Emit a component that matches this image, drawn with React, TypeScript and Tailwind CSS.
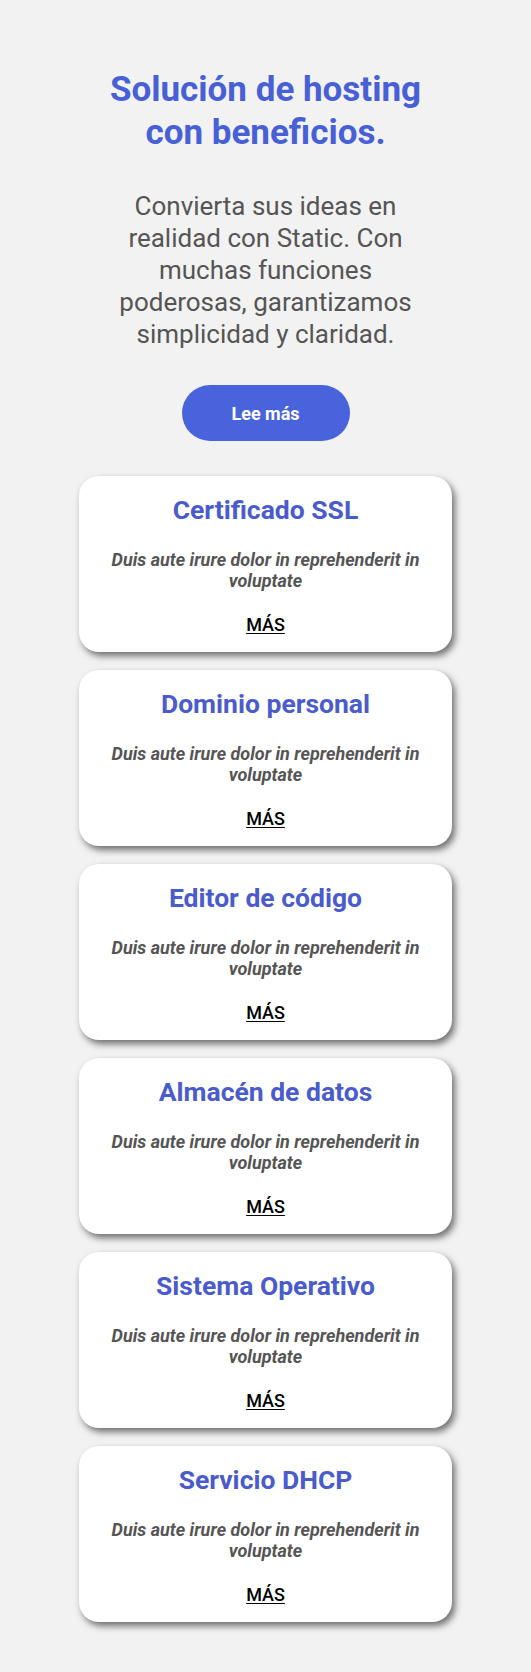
const features = [
  "Certificado SSL",
  "Dominio personal",
  "Editor de código",
  "Almacén de datos",
  "Sistema Operativo",
  "Servicio DHCP",
];

function FeatureCard({ title }: { title: string }) {
  return (
    <div className="w-[373px] bg-white rounded-[20px] shadow-[3px_4px_7px_rgba(0,0,0,0.55)] pt-[18px] pb-[18px] px-3 flex flex-col items-center text-center">
      <h2 className="text-[26.5px] leading-[32px] font-bold text-[#4a5ccc]">
        {title}
      </h2>
      <p className="mt-[23px] text-[18px] leading-[21px] italic font-bold text-[#555555]">
        Duis aute irure dolor in reprehenderit in voluptate
      </p>
      <a
        href="#"
        className="mt-[24px] text-[18px] leading-[19px] font-medium text-black underline underline-offset-2"
      >
        MÁS
      </a>
    </div>
  );
}

export default function App() {
  return (
    <div
      className="min-h-screen bg-[#f2f2f2] flex flex-col items-center pt-[68px] pb-[51px]"
      style={{ fontFamily: "Roboto, 'Liberation Sans', sans-serif" }}
    >
      <section className="w-[330px] flex flex-col items-center text-center">
        <h1 className="text-[35px] leading-[43px] font-bold text-[#4860d6]">
          Solución de hosting con beneficios.
        </h1>
        <p className="mt-[36px] text-[26px] leading-[32px] text-[#555555]">
          Convierta sus ideas en realidad con Static. Con muchas funciones
          poderosas, garantizamos simplicidad y claridad.
        </p>
        <button className="mt-[35px] w-[168px] h-[56px] rounded-full bg-[#4963dc] text-white text-[18px] font-bold">
          Lee más
        </button>
      </section>
      <div className="mt-[35px] flex flex-col items-center gap-[18px]">
        {features.map((f) => (
          <FeatureCard key={f} title={f} />
        ))}
      </div>
    </div>
  );
}
